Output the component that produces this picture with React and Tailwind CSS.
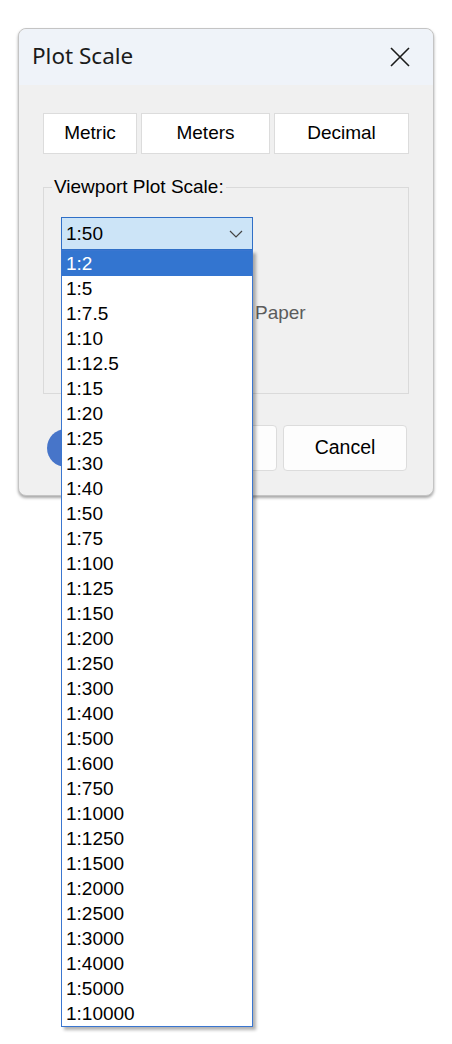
import { useState } from "react";

const scales = [
  "1:2", "1:5", "1:7.5", "1:10", "1:12.5", "1:15", "1:20", "1:25", "1:30", "1:40",
  "1:50", "1:75", "1:100", "1:125", "1:150", "1:200", "1:250", "1:300", "1:400",
  "1:500", "1:600", "1:750", "1:1000", "1:1250", "1:1500", "1:2000", "1:2500",
  "1:3000", "1:4000", "1:5000", "1:10000",
];

function App() {
  const [value, setValue] = useState("1:50");
  const [hover, setHover] = useState("1:2");

  return (
    <div className="min-h-screen bg-white font-['Liberation_Sans',Arial,sans-serif] text-black">
      <div className="pt-[28px] pl-[18px]">
        {/* dialog */}
        <div className="w-[416px] h-[468px] rounded-[8px] border border-[#c4c4c4] bg-[#f0f0f0] shadow-[0_2px_3px_rgba(0,0,0,0.35)]">
          {/* title bar */}
          <div className="h-[56px] rounded-t-[8px] bg-[#eff3f9] flex items-center justify-between pl-[13px] pr-[23px]">
            <span className="font-['Noto_Sans',sans-serif] text-[22.5px] text-[#1b1b1b] leading-none -mt-[2px]">
              Plot Scale
            </span>
            <svg width="20" height="20" viewBox="0 0 20 20" className="-mt-[1px]">
              <path d="M1 1 L19 19 M19 1 L1 19" stroke="#1a1a1a" strokeWidth="1.6" fill="none" />
            </svg>
          </div>

          {/* body */}
          <div className="px-[24px] pt-[28px]">
            <div className="flex gap-[4px] text-[19px]">
              <button className="w-[94px] h-[41px] bg-white border border-[#dcdcdc]">Metric</button>
              <button className="w-[129px] h-[41px] bg-white border border-[#dcdcdc]">Meters</button>
              <button className="w-[135px] h-[41px] bg-white border border-[#dcdcdc]">Decimal</button>
            </div>

            {/* group box */}
            <div className="relative mt-[33px] h-[207px] border border-[#dadada] pl-[17px] pt-[29px]">
              <span className="absolute -top-[13px] left-[8px] bg-[#f0f0f0] px-[2px] text-[19px] leading-[24px]">
                Viewport Plot Scale:
              </span>

              <div className="relative w-[192px]">
                <div className="h-[33px] bg-[#cce4f7] border border-[#2f6fc7] flex items-center justify-between pl-[4px] pr-[9px]">
                  <span className="text-[19px] leading-none">{value}</span>
                  <svg width="14" height="8" viewBox="0 0 14 8">
                    <path d="M1 1 L7 7 L13 1" stroke="#444" strokeWidth="1.2" fill="none" />
                  </svg>
                </div>

                {/* dropdown list */}
                <ul className="absolute top-[33px] left-0 z-10 w-[192px] bg-white border border-[#3a76d0] shadow-[3px_3px_3px_rgba(0,0,0,0.3)]">
                  {scales.map((s) => (
                    <li
                      key={s}
                      onMouseEnter={() => setHover(s)}
                      onClick={() => setValue(s)}
                      className={
                        s === hover
                          ? "h-[25px] pl-[4px] text-[19px] leading-[25px] bg-[#3375d0] text-white"
                          : "h-[25px] pl-[4px] text-[19px] leading-[25px] text-black"
                      }
                    >
                      {s}
                    </li>
                  ))}
                </ul>
              </div>

              <div className="mt-[51px] ml-[194px] text-[19px] leading-[24px] text-[#5c5c5c]">Paper</div>
            </div>

            {/* bottom buttons (left two sit under the open list) */}
            <div className="mt-[31px] flex items-center text-[19px]">
              <button aria-label="OK" className="ml-[4px] w-[100px] h-[38px] rounded-full bg-[#4775c9]"></button>
              <button aria-label="Apply" className="ml-[6px] w-[124px] h-[46px] rounded-[4px] bg-[#fdfdfd] border border-[#dcdcdc]"></button>
              <button className="ml-[6px] w-[124px] h-[46px] rounded-[4px] bg-[#fdfdfd] border border-[#dcdcdc] text-[19.5px]">Cancel</button>
            </div>
          </div>
        </div>
      </div>
    </div>
  );
}

export default App;
